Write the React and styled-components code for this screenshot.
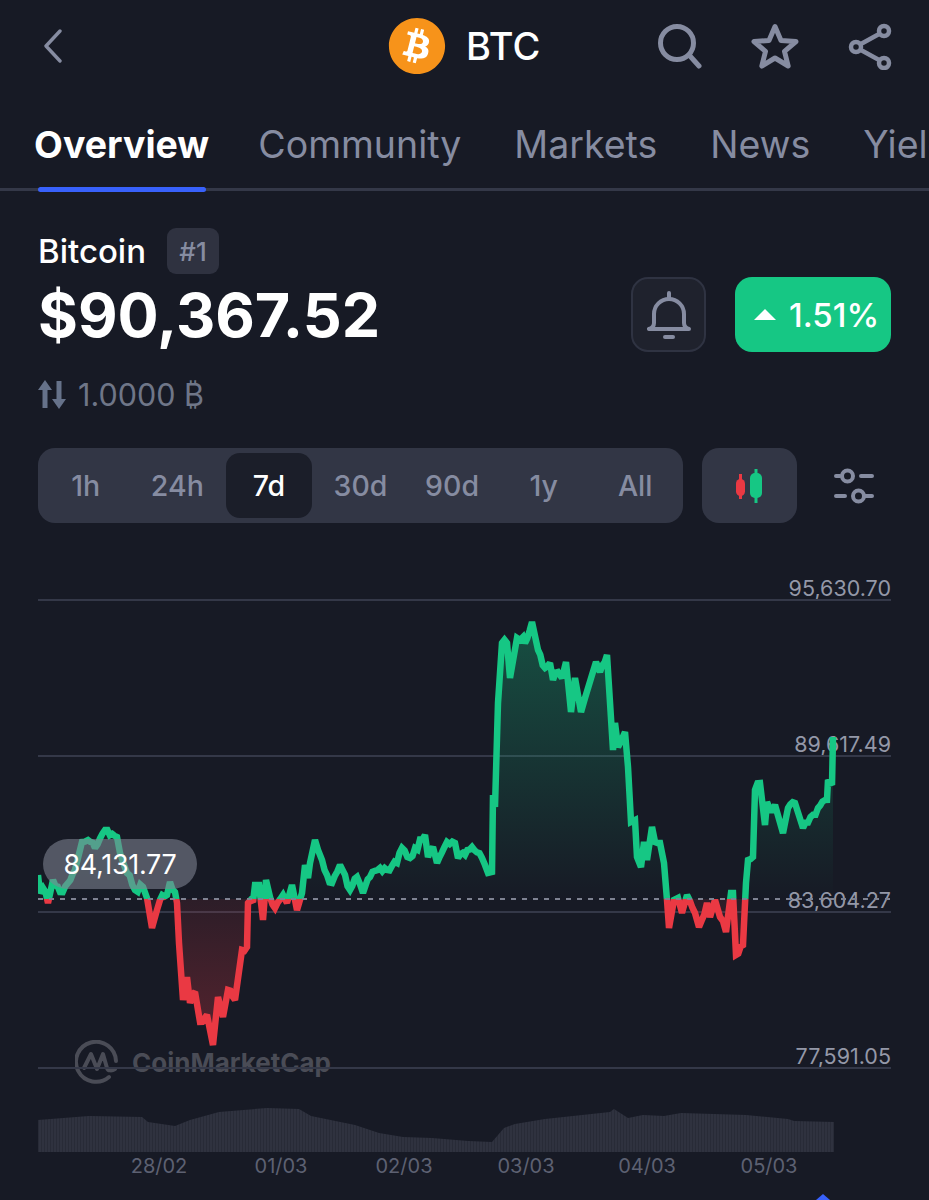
import React from "react";
import styled, { createGlobalStyle } from "styled-components";
import { FaBitcoin } from "react-icons/fa";

const GlobalStyle = createGlobalStyle`
  html, body {
    margin: 0;
    background: #171a25;
  }
  * {
    box-sizing: border-box;
  }
`;

const Page = styled.div`
  position: relative;
  width: 929px;
  height: 1200px;
  overflow: hidden;
  background: #171a25;
  color: #fff;
  font-family: Inter, "Liberation Sans", sans-serif;
`;

const Header = styled.header`
  display: grid;
  grid-template-columns: 344px 1fr auto;
  align-items: center;
  height: 92px;
  padding: 0 37px 0 44px;
`;

const IconButton = styled.div`
  display: flex;
  color: #868ca1;
`;

const Coin = styled.div`
  display: flex;
  align-items: center;
  gap: 20px;
`;

const CoinLogo = styled.div`
  display: flex;
  align-items: center;
  justify-content: center;
  width: 58px;
  height: 58px;
  border-radius: 50%;
  background: radial-gradient(circle, #fff 60%, transparent 61%);
  color: #f7931a;
  font-size: 58px;
`;

const CoinName = styled.span`
  font-size: 38px;
  font-weight: 500;
`;

const HeaderActions = styled.div`
  display: flex;
  align-items: center;
  gap: 49px;
`;

const TabBar = styled.div`
  position: relative;
  margin-top: -3px;
  border-bottom: 3px solid #343848;
`;

const Tabs = styled.nav`
  display: flex;
  gap: 53px;
  height: 99px;
  padding: 0 0 0 34px;
  white-space: nowrap;
  overflow: hidden;
`;

const Tab = styled.span`
  padding-top: 34px;
  font-size: 37.5px;
  line-height: 44px;
  font-weight: ${(p) => (p.$active ? 700 : 400)};
  color: ${(p) => (p.$active ? "#fff" : "#868ca1")};

  &:first-child {
    margin-right: -4px;
  }
`;

const TabMarker = styled.div`
  position: absolute;
  left: 38px;
  bottom: -4px;
  width: 168px;
  height: 5px;
  border-radius: 3px;
  background: #3861fb;
`;

const Summary = styled.section`
  padding: 37px 38px 0;
`;

const NameRow = styled.div`
  display: flex;
  align-items: center;
  gap: 21px;
  height: 46px;
`;

const Name = styled.span`
  font-size: 33px;
  font-weight: 500;
`;

const Rank = styled.span`
  display: flex;
  align-items: center;
  justify-content: center;
  width: 52px;
  height: 46px;
  border-radius: 9px;
  background: #2f3240;
  color: #868ca1;
  font-size: 26px;
  font-weight: 500;
`;

const PriceRow = styled.div`
  display: flex;
  align-items: center;
  height: 75px;
  margin-top: 3px;
`;

const Price = styled.div`
  flex: 1;
  font-size: 61px;
  font-weight: 700;
`;

const BellButton = styled.div`
  display: flex;
  align-items: center;
  justify-content: center;
  width: 75px;
  height: 75px;
  margin-right: 29px;
  border: 2px solid #2f3342;
  border-radius: 17px;
  background: #1f222d;
  color: #868ca1;
`;

const Change = styled.div`
  display: flex;
  align-items: center;
  gap: 13px;
  width: 156px;
  height: 75px;
  padding-left: 19px;
  border-radius: 17px;
  background: #16c784;
  font-size: 33px;
  font-weight: 500;
`;

const Triangle = styled.span`
  width: 0;
  height: 0;
  border-left: 11px solid transparent;
  border-right: 11px solid transparent;
  border-bottom: 11px solid #fff;
`;

const Conversion = styled.div`
  display: flex;
  align-items: center;
  gap: 12px;
  height: 40px;
  margin-top: 22px;
  color: #6f7688;
  font-size: 30.5px;
`;

const RangeRow = styled.div`
  display: flex;
  align-items: center;
  margin-top: 34px;
`;

const RangeBar = styled.div`
  display: grid;
  grid-template-columns: repeat(7, 1fr);
  width: 645px;
  height: 75px;
  padding: 5px 2px;
  border-radius: 17px;
  background: #323645;
`;

const RangeItem = styled.div`
  display: flex;
  align-items: center;
  justify-content: center;
  margin: 0 3px;
  border-radius: 14px;
  font-size: 28.5px;
  font-weight: 500;
  color: ${(p) => (p.$active ? "#fff" : "#868ca1")};
  background: ${(p) => (p.$active ? "#1b1e29" : "transparent")};
`;

const CandleButton = styled.div`
  display: flex;
  align-items: center;
  justify-content: center;
  width: 95px;
  height: 75px;
  margin-left: 19px;
  border-radius: 17px;
  background: #323645;
`;

const FilterButton = styled.div`
  display: flex;
  margin-left: 37px;
  color: #868ca1;
`;

const Chart = styled.section`
  position: relative;
  height: 630px;
  margin-top: 47px;
`;

const ChartSvg = styled.svg`
  position: absolute;
  inset: 0;
`;

const AxisLabel = styled.span`
  position: absolute;
  right: 38px;
  top: ${(p) => p.$top}px;
  font-size: 21.5px;
  line-height: 26px;
  color: #9498a8;
`;

const DateLabel = styled.span`
  position: absolute;
  top: 583px;
  left: ${(p) => p.$left}px;
  transform: translateX(-50%);
  font-size: 20px;
  line-height: 26px;
  color: #5d6172;
`;

const Watermark = styled.div`
  position: absolute;
  left: 75px;
  top: 470px;
  display: flex;
  align-items: center;
  gap: 13px;
  color: #4a4c56;
  font-size: 26px;
  font-weight: 700;
`;

const ValuePill = styled.div`
  position: absolute;
  left: 43px;
  top: 269px;
  display: flex;
  align-items: center;
  justify-content: center;
  width: 154px;
  height: 50px;
  border-radius: 25px;
  background: rgba(128, 132, 146, 0.58);
  font-size: 27px;
  letter-spacing: -0.3px;
`;

const ScrollHint = styled.div`
  position: absolute;
  left: 816px;
  bottom: 0;
  width: 0;
  height: 0;
  border-left: 7px solid transparent;
  border-right: 7px solid transparent;
  border-bottom: 6px solid #3861fb;
`;

const LINE = [
  [38, 875], [40, 893], [43, 888], [48, 903], [53, 880], [60, 892], [68, 883], [75, 870], [82, 842], [88, 840],
  [95, 848], [105, 830], [117, 837], [120, 853], [127, 873], [135, 890], [143, 887], [147, 898], [152, 928],
  [157, 910], [160, 900], [167, 895], [170, 882], [175, 892], [177, 903], [179, 943], [183, 1000], [187, 977],
  [190, 1003], [195, 992], [200, 1022], [207, 1015], [213, 1045], [218, 997], [223, 1017], [228, 990], [235, 1000],
  [242, 950], [247, 947], [248, 903], [253, 902], [255, 885], [259, 885], [263, 920], [266, 880], [270, 897],
  [275, 908], [283, 895], [287, 903], [292, 885], [297, 910], [302, 893], [305, 865], [308, 878], [310, 863],
  [315, 840], [318, 850], [322, 860], [327, 875], [332, 883], [340, 865], [350, 890], [357, 877], [363, 893],
  [370, 877], [380, 868], [387, 870], [397, 863], [402, 848], [410, 858], [425, 835], [428, 857], [433, 847],
  [437, 863], [447, 842], [455, 843], [458, 858], [472, 847], [482, 858], [488, 873], [492, 872], [493, 795],
  [495, 807], [498, 703], [502, 643], [507, 643], [510, 678], [517, 638], [523, 637], [525, 643], [532, 622],
  [538, 650], [545, 668], [550, 663], [553, 680], [558, 672], [562, 678], [566, 662], [571, 712], [575, 678],
  [581, 712], [585, 698], [592, 675], [596, 662], [600, 672], [607, 655], [613, 750], [615, 723], [618, 747],
  [625, 732], [628, 767], [631, 822], [635, 820], [637, 857], [641, 867], [644, 842], [647, 860], [652, 827],
  [655, 842], [660, 843], [664, 863], [667, 900], [669, 928], [674, 900], [678, 898], [682, 913], [687, 895],
  [695, 913], [699, 927], [707, 903], [710, 917], [715, 900], [720, 917], [726, 932], [731, 893], [733, 893],
  [736, 955], [743, 945], [746, 883], [748, 860], [753, 857], [755, 790], [760, 783], [765, 825], [767, 802],
  [771, 812], [775, 805], [783, 833], [788, 808], [795, 803], [803, 828], [818, 808], [827, 800], [828, 780],
  [832, 785], [833, 737],
];

const VOLUME = [
  [38, 1120], [89, 1116], [142, 1117], [148, 1122], [175, 1126], [190, 1120], [219, 1112], [267, 1108], [299, 1109],
  [311, 1116], [355, 1125], [379, 1133], [403, 1137], [432, 1138], [468, 1141], [492, 1142], [504, 1128], [515, 1124],
  [545, 1119], [610, 1112], [614, 1109], [628, 1118], [643, 1115], [664, 1116], [681, 1113], [746, 1115], [788, 1119],
  [794, 1121], [834, 1122],
];

const BASE_Y = 899;

const noise = (i) => {
  const v = Math.sin(i * 12.9898) * 43758.5453;
  return v - Math.floor(v) - 0.5;
};

const roughen = (list) => {
  const out = [];
  list.forEach(([x, y], i) => {
    out.push([x, y]);
    const next = list[i + 1];
    if (!next) return;
    const dx = next[0] - x;
    const dy = next[1] - y;
    const steps = Math.floor(dx / 2.2);
    if (steps < 2 || Math.abs(dy / dx) > 3) return;
    for (let s = 1; s < steps; s++) {
      const t = s / steps;
      out.push([+(x + dx * t).toFixed(1), +(y + dy * t + noise(i * 31 + s) * 7).toFixed(1)]);
    }
  });
  return out;
};

const toPoints = (list) => list.map(([x, y]) => `${x},${y}`).join(" ");
const linePoints = toPoints(roughen(LINE));
const areaPoints = `38,${BASE_Y} ${linePoints} 833,${BASE_Y}`;
const volumePoints = `38,1152 ${toPoints(VOLUME)} 834,1152`;

const GRID = [
  { y: 600, label: "95,630.70" },
  { y: 756, label: "89,617.49" },
  { y: 912, label: "83,604.27" },
  { y: 1068, label: "77,591.05" },
];

const DATES = [
  { x: 159, label: "28/02" },
  { x: 281, label: "01/03" },
  { x: 404, label: "02/03" },
  { x: 526, label: "03/03" },
  { x: 647, label: "04/03" },
  { x: 769, label: "05/03" },
];

const RANGES = ["1h", "24h", "7d", "30d", "90d", "1y", "All"];
const TABS = ["Overview", "Community", "Markets", "News", "Yield"];
const CHART_TOP = 570;

function App() {
  return (
    <Page>
      <GlobalStyle />
      <Header>
        <IconButton>
          <svg width="18" height="34" viewBox="0 0 18 34" fill="none" stroke="currentColor" strokeWidth="3.4" strokeLinecap="round" strokeLinejoin="round">
            <path d="M16 2 2 17l14 15" />
          </svg>
        </IconButton>
        <Coin>
          <CoinLogo>
            <FaBitcoin />
          </CoinLogo>
          <CoinName>BTC</CoinName>
        </Coin>
        <HeaderActions>
          <IconButton>
            <svg width="44" height="46" viewBox="0 0 44 46" fill="none" stroke="currentColor" strokeWidth="5" strokeLinecap="round">
              <circle cx="19" cy="20" r="16.5" />
              <path d="m32 33 9 10" />
            </svg>
          </IconButton>
          <IconButton>
            <svg width="48" height="46" viewBox="0 0 48 46" fill="none" stroke="currentColor" strokeWidth="5" strokeLinejoin="round">
              <path d="M24 3.5 30 17.5 45 18.5 33.5 28.3 37.2 43 24 35 10.8 43 14.5 28.3 3 18.5 18 17.5Z" />
            </svg>
          </IconButton>
          <IconButton>
            <svg width="44" height="47" viewBox="0 0 44 47" fill="none" stroke="currentColor" strokeWidth="4.5">
              <circle cx="36" cy="8" r="5" />
              <circle cx="8" cy="24" r="5" />
              <circle cx="36" cy="40" r="5" />
              <path d="m12 21.5 20-11M12 26.5l20 11" />
            </svg>
          </IconButton>
        </HeaderActions>
      </Header>

      <TabBar>
        <Tabs>
          {TABS.map((t, i) => (
            <Tab key={t} $active={i === 0}>{t}</Tab>
          ))}
        </Tabs>
        <TabMarker />
      </TabBar>

      <Summary>
        <NameRow>
          <Name>Bitcoin</Name>
          <Rank>#1</Rank>
        </NameRow>
        <PriceRow>
          <Price>$90,367.52</Price>
          <BellButton>
            <svg width="44" height="48" viewBox="0 0 44 48" fill="none" stroke="currentColor" strokeWidth="4" strokeLinejoin="round" strokeLinecap="round">
              <path d="M22 2v6" />
              <path d="M2 38h40c-3-1-5-3-5-6V23a15 15 0 0 0-30 0v9c0 3-2 5-5 6Z" />
              <path d="M18 46h8" />
            </svg>
          </BellButton>
          <Change>
            <Triangle />
            1.51%
          </Change>
        </PriceRow>
        <Conversion>
          <svg width="28" height="29" viewBox="0 0 28 29" fill="#66728a">
            <path d="M7 0 14 10H9.5V28H4.5V10H0ZM21 29 14 19H18.5V1H23.5V19H28Z" />
          </svg>
          1.0000 ₿
        </Conversion>
        <RangeRow>
          <RangeBar>
            {RANGES.map((r) => (
              <RangeItem key={r} $active={r === "7d"}>{r}</RangeItem>
            ))}
          </RangeBar>
          <CandleButton>
            <svg width="30" height="36" viewBox="0 0 30 36">
              <path d="M5.5 6v25" stroke="#ea3943" strokeWidth="3" />
              <rect x="1" y="11" width="9" height="17" rx="4.5" fill="#ea3943" />
              <path d="M21 1v34" stroke="#16c784" strokeWidth="3" />
              <rect x="15" y="5" width="12" height="25" rx="5" fill="#16c784" />
            </svg>
          </CandleButton>
          <FilterButton>
            <svg width="40" height="36" viewBox="0 0 40 36" fill="none" stroke="currentColor" strokeWidth="4" strokeLinecap="round">
              <circle cx="13.5" cy="8" r="5.5" />
              <path d="M2 8h4M27 8h11" />
              <circle cx="24.5" cy="28" r="5.5" />
              <path d="M2 28h9M31 28h7" />
            </svg>
          </FilterButton>
        </RangeRow>
      </Summary>

      <Chart>
        {GRID.map((g) => (
          <AxisLabel key={g.label} $top={g.y - CHART_TOP - 25}>{g.label}</AxisLabel>
        ))}
        <Watermark>
          <svg width="44" height="44" viewBox="0 0 44 44" fill="none" stroke="currentColor" strokeWidth="4" strokeLinecap="round" strokeLinejoin="round">
            <path d="M34 37A20 20 0 1 1 41 21" />
            <path d="M9 28 16 14l6 15 6-15 4 14c1 3 5 3 8 1" />
          </svg>
          CoinMarketCap
        </Watermark>
        <ChartSvg width="929" height="630" viewBox={`0 ${CHART_TOP} 929 630`}>
          <defs>
            <linearGradient id="greenFill" gradientUnits="userSpaceOnUse" x1="0" y1="630" x2="0" y2={BASE_Y}>
              <stop offset="0" stopColor="#16c784" stopOpacity="0.3" />
              <stop offset="1" stopColor="#16c784" stopOpacity="0" />
            </linearGradient>
            <linearGradient id="redFill" gradientUnits="userSpaceOnUse" x1="0" y1={BASE_Y} x2="0" y2="1045">
              <stop offset="0" stopColor="#ea3943" stopOpacity="0.1" />
              <stop offset="1" stopColor="#ea3943" stopOpacity="0.3" />
            </linearGradient>
            <pattern id="volumeBars" patternUnits="userSpaceOnUse" width="3" height="4">
              <rect width="2" height="4" fill="#2f323f" />
              <rect x="2" width="1" height="4" fill="#282b37" />
            </pattern>
            <clipPath id="above">
              <rect x="38" y="570" width="891" height={BASE_Y - 570} />
            </clipPath>
            <clipPath id="below">
              <rect x="38" y={BASE_Y} width="891" height="300" />
            </clipPath>
          </defs>
          {GRID.map((g) => (
            <rect key={g.y} x="38" y={g.y - 1} width="853" height="2" fill="#343848" />
          ))}
          <polygon points={volumePoints} fill="url(#volumeBars)" />
          <polygon points={areaPoints} fill="url(#greenFill)" clipPath="url(#above)" />
          <polygon points={areaPoints} fill="url(#redFill)" clipPath="url(#below)" />
          <polyline points={linePoints} fill="none" stroke="#16c784" strokeWidth="6.5" strokeLinejoin="miter" strokeMiterlimit="2" clipPath="url(#above)" />
          <polyline points={linePoints} fill="none" stroke="#ea3943" strokeWidth="6.5" strokeLinejoin="miter" strokeMiterlimit="2" clipPath="url(#below)" />
          <line x1="38" x2="891" y1={BASE_Y} y2={BASE_Y} stroke="#7f8392" strokeWidth="2" strokeDasharray="5 6" />
        </ChartSvg>
        <ValuePill>84,131.77</ValuePill>
        {DATES.map((d) => (
          <DateLabel key={d.label} $left={d.x}>{d.label}</DateLabel>
        ))}
      </Chart>
      <ScrollHint />
    </Page>
  );
}

export default App;
